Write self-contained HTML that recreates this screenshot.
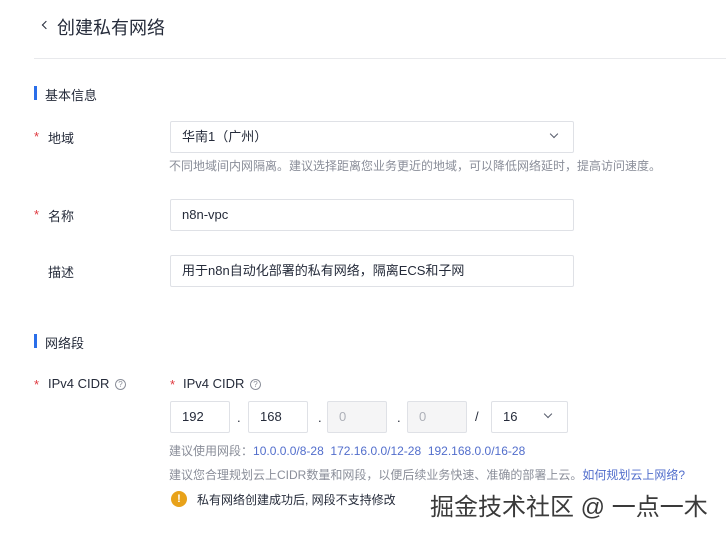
<!DOCTYPE html><html><head><meta charset="utf-8"><style>
body{margin:0;width:726px;height:535px;background:#fff;position:relative;overflow:hidden;font-family:"Liberation Sans","Noto Sans CJK SC",sans-serif;color:#252b3a}
.a{position:absolute;white-space:nowrap}
.lbl{font-size:13px;color:#252b3a}
.star{color:#e0383e;font-size:13px}
.box{position:absolute;border:1px solid #dfe1e6;border-radius:2px;box-sizing:border-box;font-size:13px;line-height:30px;padding-left:11px;background:#fff}
.dis{background:#f5f5f6;color:#adb0b8}
.hint{font-size:12px;color:#8a8e99}
.link{color:#526ecc}
.bar{position:absolute;width:3px;height:14px;background:#2a6ee9}
.chev{position:absolute;width:5px;height:5px;border-right:1.5px solid #575d6c;border-bottom:1.5px solid #575d6c;transform:rotate(45deg)}
.q{display:inline-block;width:9px;height:9px;border:1px solid #8a8e99;border-radius:50%;font-size:8px;line-height:9px;text-align:center;color:#8a8e99;vertical-align:1px;margin-left:2px}
</style></head><body>
<div class="chev" style="left:43px;top:22px;transform:rotate(135deg);border-color:#252b3a;width:5px;height:5px"></div>
<div class="a" style="left:57px;top:14px;font-size:18px;">创建私有网络</div>
<div class="a" style="left:34px;top:58px;width:692px;height:1px;background:#e8e9ec"></div>
<div class="bar" style="left:34px;top:86px"></div>
<div class="a lbl" style="left:45px;top:85px">基本信息</div>
<div class="a star" style="left:34px;top:129px">*</div><div class="a lbl" style="left:48px;top:128px">地域</div>
<div class="box" style="left:170px;top:121px;width:404px;height:32px">华南1（广州）</div>
<div class="chev" style="left:551px;top:131px"></div>
<div class="a hint" style="left:169px;top:157px">不同地域间内网隔离。建议选择距离您业务更近的地域，可以降低网络延时，提高访问速度。</div>
<div class="a star" style="left:34px;top:207px">*</div><div class="a lbl" style="left:48px;top:206px">名称</div>
<div class="box" style="left:170px;top:199px;width:404px;height:32px">n8n-vpc</div>
<div class="a lbl" style="left:48px;top:262px">描述</div>
<div class="box" style="left:170px;top:255px;width:404px;height:32px">用于n8n自动化部署的私有网络，隔离ECS和子网</div>
<div class="bar" style="left:34px;top:334px"></div>
<div class="a lbl" style="left:45px;top:333px">网络段</div>
<div class="a star" style="left:34px;top:377px">*</div><div class="a lbl" style="left:48px;top:376px">IPv4 CIDR <span class="q">?</span></div>
<div class="a star" style="left:170px;top:377px">*</div><div class="a lbl" style="left:183px;top:376px">IPv4 CIDR <span class="q">?</span></div>
<div class="box" style="left:170px;top:401px;width:60px;height:32px">192</div>
<div class="a lbl" style="left:237px;top:410px">.</div>
<div class="box" style="left:248px;top:401px;width:60px;height:32px">168</div>
<div class="a lbl" style="left:318px;top:410px">.</div>
<div class="box dis" style="left:327px;top:401px;width:60px;height:32px">0</div>
<div class="a lbl" style="left:397px;top:410px">.</div>
<div class="box dis" style="left:407px;top:401px;width:60px;height:32px">0</div>
<div class="a lbl" style="left:475px;top:409px">/</div>
<div class="box" style="left:491px;top:401px;width:77px;height:32px">16</div>
<div class="chev" style="left:545px;top:411px"></div>
<div class="a hint" style="left:169px;top:442px">建议使用网段：<span class="link">10.0.0.0/8-28&nbsp; 172.16.0.0/12-28&nbsp; 192.168.0.0/16-28</span></div>
<div class="a hint" style="left:169px;top:466px">建议您合理规划云上CIDR数量和网段，以便后续业务快速、准确的部署上云。<span class="link">如何规划云上网络?</span></div>
<div class="a" style="left:171px;top:491px;width:16px;height:16px;border-radius:50%;background:#e8a21a;color:#fff;font-size:11px;font-weight:bold;text-align:center;line-height:16px">!</div>
<div class="a lbl" style="left:197px;top:491px;font-size:12px">私有网络创建成功后, 网段不支持修改</div>
<div class="a" style="left:430px;top:487px;font-size:24px;color:#3a3a3a;text-shadow:0 0 2px #fff,0 0 2px #fff">掘金技术社区 @ 一点一木</div>
</body></html>
